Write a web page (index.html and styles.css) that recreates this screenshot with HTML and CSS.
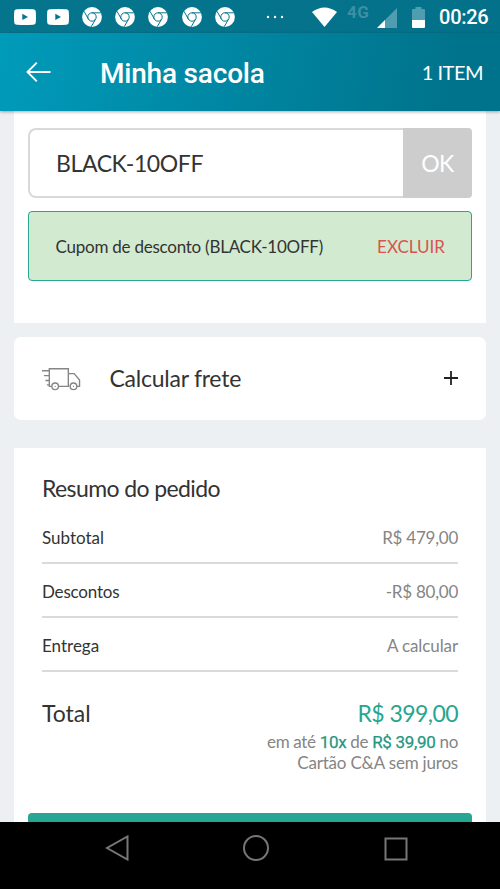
FILE: index.html
```html
<!DOCTYPE html>
<html lang="pt-BR">
<head>
<meta charset="utf-8">
<title>Minha sacola</title>
<link rel="stylesheet" href="styles.css">
</head>
<body>
<svg width="0" height="0" class="defs">
  <symbol id="video" viewBox="0 0 22 16"><path fill="#fff" fill-rule="evenodd" d="M3 .3Q11-.2 19 .3Q21.7.4 21.8 3Q22.2 8 21.8 13Q21.7 15.6 19 15.7Q11 16.2 3 15.7Q.3 15.6.2 13Q-.2 8 .2 3Q.3.4 3 .3ZM8.3 4.8V11L14 7.9Z"/></symbol>
  <symbol id="chrome" viewBox="0 0 20 20"><circle cx="10" cy="10" r="9.9" fill="#fff"/><g fill="none" stroke="#08758f" stroke-width="1"><circle cx="10" cy="10" r="4.2"/><path d="M10 5.8H19M6.4 12.1L2 4.3M13.6 12.1L9.2 19.8"/></g></symbol>
</svg>
<div class="phone">
  <div class="status">
    <div class="notices">
      <svg class="video"><use href="#video"/></svg>
      <svg class="video"><use href="#video"/></svg>
      <svg class="chrome"><use href="#chrome"/></svg>
      <svg class="chrome"><use href="#chrome"/></svg>
      <svg class="chrome"><use href="#chrome"/></svg>
      <svg class="chrome"><use href="#chrome"/></svg>
      <svg class="chrome"><use href="#chrome"/></svg>
    </div>
    <svg class="more" viewBox="0 0 18 4" fill="#fff"><circle cx="2" cy="2" r="1.2"/><circle cx="9" cy="2" r="1.2"/><circle cx="16" cy="2" r="1.2"/></svg>
    <svg class="wifi" viewBox="0 0 25 20"><path fill="#fff" d="M0 5Q12.500-4 25 5L12.500 20Z"/></svg>
    <span class="network">4G</span>
    <svg class="signal" viewBox="0 0 20 20"><path fill="#4f9eb0" d="M20 0V20H0Z"/><path fill="#fff" d="M8 12V20H0Z"/></svg>
    <svg class="battery" viewBox="0 0 13 21"><path fill="#4f9eb0" d="M0 3Q0 2 1 2H3.500V0H9.500V2H12Q13 2 13 3V13H0Z"/><path fill="#fff" d="M0 13H13V20Q13 21 12 21H1Q0 21 0 20Z"/></svg>
    <span class="clock">00:26</span>
  </div>
  <header class="bar">
    <svg class="back" viewBox="0 0 25 20" fill="none" stroke="#fff" stroke-width="1.900"><path d="M10.800 .7L1.500 10L10.800 19.300M1.500 10H24.500"/></svg>
    <h1>Minha sacola</h1>
    <span class="count">1 ITEM</span>
  </header>
  <main>
    <section class="card coupon">
      <div class="entry"><span class="code">BLACK-10OFF</span><button class="ok">OK</button></div>
      <div class="applied"><span class="name">Cupom de desconto (BLACK-10OFF)</span><span class="remove">EXCLUIR</span></div>
    </section>
    <section class="card shipping">
      <svg class="truck" viewBox="0 0 40 24" fill="none" stroke="#858585" stroke-width="1.400"><path d="M10 19.500H7.500V1.500H27V19.500H17M27 6.500H33L38.500 13V19.500H36M28 19.500H27M0 3.500H7M2 8.500H7M3.500 13.500H7M5 18H7"/><circle cx="13.500" cy="19.500" r="3.400"/><circle cx="32.300" cy="19.500" r="3.400"/><path d="M13 19.500H14M31.800 19.500H32.800"/></svg>
      <span class="label">Calcular frete</span>
      <svg class="plus" viewBox="0 0 14 14" stroke="#222" stroke-width="1.800"><path d="M7 0V14M0 7H14"/></svg>
    </section>
    <section class="card summary">
      <h2>Resumo do pedido</h2>
      <div class="row"><span>Subtotal</span><span class="value">R$ 479,00</span></div>
      <div class="row"><span class="discount">Descontos</span><span class="value">-R$ 80,00</span></div>
      <div class="row"><span>Entrega</span><span class="value pending">A calcular</span></div>
      <div class="total"><span>Total</span><span class="amount">R$ 399,00</span></div>
      <p class="terms">em até <b>10x</b> de <b>R$ 39,90</b> no<br><span class="card-name">Cartão C&amp;A sem juros</span></p>
      <div class="cta"></div>
    </section>
  </main>
  <nav>
    <svg class="nav-back" viewBox="0 0 26 26"><path d="M22.500 1.500V24.500L2 13Z"/></svg>
    <svg viewBox="0 0 26 26"><circle cx="13" cy="13" r="12"/></svg>
    <svg viewBox="0 0 26 26"><rect x="2.500" y="3.500" width="21" height="21"/></svg>
  </nav>
</div>
</body>
</html>
```

FILE: styles.css
```css
* { box-sizing: border-box; }
body { margin: 0; font-family: Lato, sans-serif; color: #333; }
.defs { display: none; }
svg { display: block; flex: none; }
.phone { width: 500px; height: 889px; display: flex; flex-direction: column; overflow: hidden; background: #ecf0f2; }
.status { height: 33px; flex: none; display: flex; align-items: center; padding-left: 8.500px; background: linear-gradient(90deg, #05758e, #04718a); color: #fff; white-space: nowrap; }
.notices { display: grid; grid-template-columns: repeat(7, 33.3px); justify-items: center; align-items: center; }
.video { width: 22px; height: 16px; }
.chrome { width: 20px; height: 20px; }
.more { width: 18px; height: 4px; margin-left: 24.500px; }
.wifi { width: 25px; height: 20px; margin-left: 28px; }
.network { width: 30px; margin-left: 10px; margin-bottom: 9px; font: 700 17px/20px Roboto, sans-serif; letter-spacing: .5px; color: #3d8fa4; }
.signal { width: 20px; height: 20px; margin-top: 2px; }
.battery { width: 13px; height: 21px; margin-left: 15px; margin-top: 1px; }
.clock { margin-left: 14px; font: 500 20px/24px Roboto, sans-serif; letter-spacing: -.3px; margin-top: 1px; }
.bar { height: 78px; flex: none; display: flex; align-items: center; padding: 0 17px 0 26px; color: #fff; background: linear-gradient(100deg, #009bba, #00738c 90%); box-shadow: 0 1px 3px #0005; z-index: 1; }
.back { width: 25px; height: 20px; margin-right: 49px; }
h1 { margin: 3px 0 0; font: 500 28px/34px Roboto, sans-serif; letter-spacing: -.2px; white-space: nowrap; }
.count { margin-left: auto; font-size: 20px; letter-spacing: -.5px; }
main { flex: 1; min-height: 0; overflow: hidden; padding: 0 14px; }
.card { background: #fff; }
.coupon { height: 212px; padding: 17px 14px; margin-bottom: 14px; }
.entry { height: 70px; display: flex; align-items: stretch; }
.code { flex: 1; padding-left: 26px; border: 2px solid #d9d9d9; border-right: 0; border-radius: 8px 0 0 8px; font-size: 23px; line-height: 66px; letter-spacing: -.4px; }
.ok { width: 69px; padding: 0; border: 0; border-radius: 0 4px 4px 0; background: #cdcdcd; color: #fff; font: 23px Lato, sans-serif; letter-spacing: -.5px; }
.applied { height: 70px; margin-top: 13px; padding: 0 26px 0 26.500px; display: flex; align-items: center; justify-content: space-between; border: 1.500px solid #28a68f; border-radius: 4px; background: #d2ead0; font-size: 17px; }
.name { letter-spacing: -.24px; }
.remove { color: #d9534f; }
.shipping { height: 83px; margin-bottom: 28px; padding: 0 28px; display: flex; align-items: center; border-radius: 7px; font-size: 23px; }
.truck { width: 39px; height: 24px; }
.label { margin-left: 28.500px; margin-bottom: 2px; letter-spacing: -.25px; }
.plus { width: 14px; height: 14px; margin-left: auto; margin-bottom: 1px; }
.summary { height: 400px; padding: 25px 28px 0; }
h2 { margin: 0; font-size: 23px; line-height: 30px; font-weight: 400; letter-spacing: -.6px; }
.row { height: 54px; display: flex; justify-content: space-between; align-items: center; padding-top: 2px; border-bottom: 2px solid #dadada; font-size: 17px; }
h2 + .row { margin-top: 7px; }
.discount { letter-spacing: -.2px; }
.value { color: #858585; letter-spacing: -.25px; }
.pending { letter-spacing: -.1px; }
.total { margin-top: 26px; display: flex; justify-content: space-between; font-size: 23px; line-height: 30px; }
.amount { color: #26a68f; letter-spacing: -.55px; }
.terms { margin: 3px 0 0; text-align: right; font-size: 17px; line-height: 21px; letter-spacing: -.35px; color: #858585; }
.terms b { font: 400 17px/20px Roboto, sans-serif; letter-spacing: -.3px; color: #26967f; -webkit-text-stroke: .25px #26967f; }
.card-name { letter-spacing: -.2px; }
.cta { height: 50px; margin: 40px -14px 0; border-radius: 4px; background: #26a693; }
nav { height: 67px; flex: none; display: flex; justify-content: center; gap: 114px; padding: 13px 0 0 11px; background: #000; }
nav svg { width: 26px; height: 26px; fill: none; stroke: #777; stroke-width: 2; }
nav .nav-back { margin: 0 -2px 0 2px; }
```
